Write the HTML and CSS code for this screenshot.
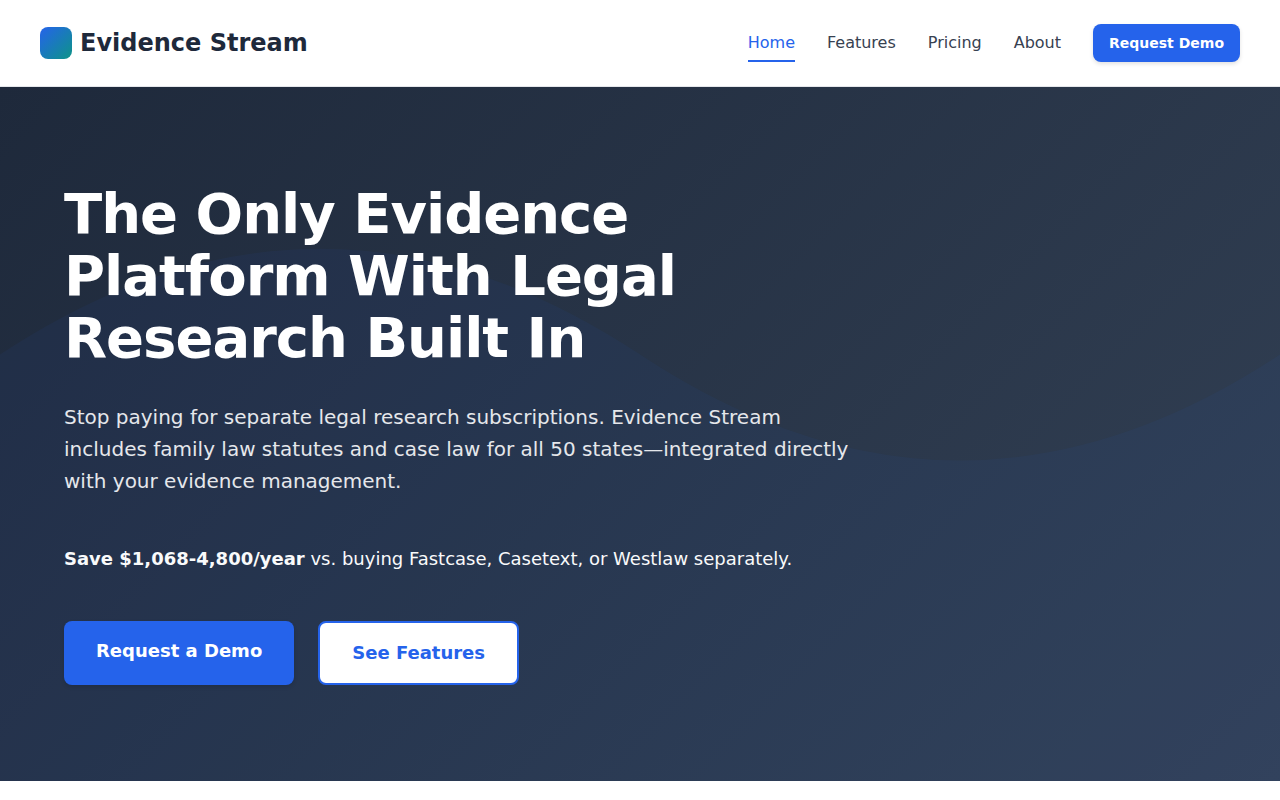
FILE: index.html
```html
<!DOCTYPE html>
<html lang="en">
<head>
  <meta charset="UTF-8">
  <meta name="viewport" content="width=device-width, initial-scale=1.0">
  <title>Evidence Stream</title>
  <link rel="stylesheet" href="styles.css">
</head>
<body>

<!-- Header -->
<header class="header">
  <a href="#" class="logo">
    <span class="logo-icon"></span>
    Evidence Stream
  </a>
  <nav class="nav">
    <a href="#" class="nav-link active">Home</a>
    <a href="#features" class="nav-link">Features</a>
    <a href="#pricing" class="nav-link">Pricing</a>
    <a href="#about" class="nav-link">About</a>
    <a href="#demo" class="btn btn-primary btn-sm">Request Demo</a>
  </nav>
</header>

<!-- Hero -->
<main>
  <section class="hero">
    <svg class="hero-wave" viewBox="0 0 1280 695" preserveAspectRatio="none" aria-hidden="true">
      <path d="M0 268 Q320 56 640 268 T1280 268 V695 H0 Z"/>
    </svg>
    <div class="hero-content">
      <h1>The Only Evidence Platform With Legal Research Built In</h1>
      <p class="hero-subtitle">Stop paying for separate legal research subscriptions. Evidence Stream includes family law statutes and case law for all 50 states—integrated directly with your evidence management.</p>
      <p class="hero-savings"><strong>Save $1,068-4,800/year</strong> vs. buying Fastcase, Casetext, or Westlaw separately.</p>
      <div class="hero-actions">
        <a href="#demo" class="btn btn-primary btn-lg">Request a Demo</a>
        <a href="#features" class="btn btn-secondary btn-lg">See Features</a>
      </div>
    </div>
  </section>
</main>

</body>
</html>
```
FILE: styles.css
```css
* {
  margin: 0;
  padding: 0;
  box-sizing: border-box;
}

body {
  font-family: "DejaVu Sans", sans-serif;
  font-size: 16px;
  color: #374151;
  background: #fff;
}

a {
  text-decoration: none;
}

/* Header */
.header {
  display: flex;
  justify-content: space-between;
  align-items: center;
  padding: 24px 40px;
  background: #fff;
  border-bottom: 1px solid #e5e7eb;
}

.logo {
  display: flex;
  align-items: center;
  gap: 8px;
  font-size: 24px;
  line-height: 32px;
  font-weight: 700;
  color: #1e293b;
}

.logo-icon {
  width: 32px;
  height: 32px;
  border-radius: 8px;
  background: linear-gradient(135deg, #2563eb, #0d9488);
}

.nav {
  display: flex;
  align-items: center;
  gap: 32px;
}

.nav-link {
  padding: 4px 0;
  line-height: 26px;
  color: #374151;
  border-top: 2px solid transparent;
  border-bottom: 2px solid transparent;
}

.nav-link.active {
  color: #2563eb;
  border-bottom-color: #2563eb;
}

/* Buttons */
.btn {
  border-radius: 8px;
  font-weight: 600;
}

.btn-primary {
  color: #fff;
  background: #2563eb;
  box-shadow: 0 2px 4px rgba(0, 0, 0, 0.12);
}

.btn-secondary {
  color: #2563eb;
  background: #fff;
  border: 2px solid #2563eb;
}

.btn-sm {
  padding: 8px 16px;
  font-size: 14px;
  line-height: 22px;
}

.btn-lg {
  padding: 16px 32px;
  font-size: 18px;
  line-height: 28px;
}

/* Hero */
.hero {
  position: relative;
  padding: 96px 64px;
  background: linear-gradient(135deg, #1e293b, #334155);
}

.hero-wave {
  position: absolute;
  top: 0;
  left: 0;
  width: 100%;
  height: 100%;
  fill: #2563eb;
  opacity: 0.05;
}

.hero-content {
  position: relative;
  max-width: 800px;
}

.hero h1 {
  max-width: 700px;
  margin-bottom: 32px;
  font-size: 56px;
  line-height: 62px;
  font-weight: 700;
  letter-spacing: -1px;
  color: #fff;
}

.hero-subtitle {
  margin-bottom: 48px;
  font-size: 20px;
  line-height: 32px;
  color: #e5e7eb;
}

.hero-savings {
  margin-bottom: 48px;
  font-size: 18px;
  line-height: 28px;
  color: #f9fafb;
}

.hero-actions {
  display: flex;
  gap: 24px;
}
```
